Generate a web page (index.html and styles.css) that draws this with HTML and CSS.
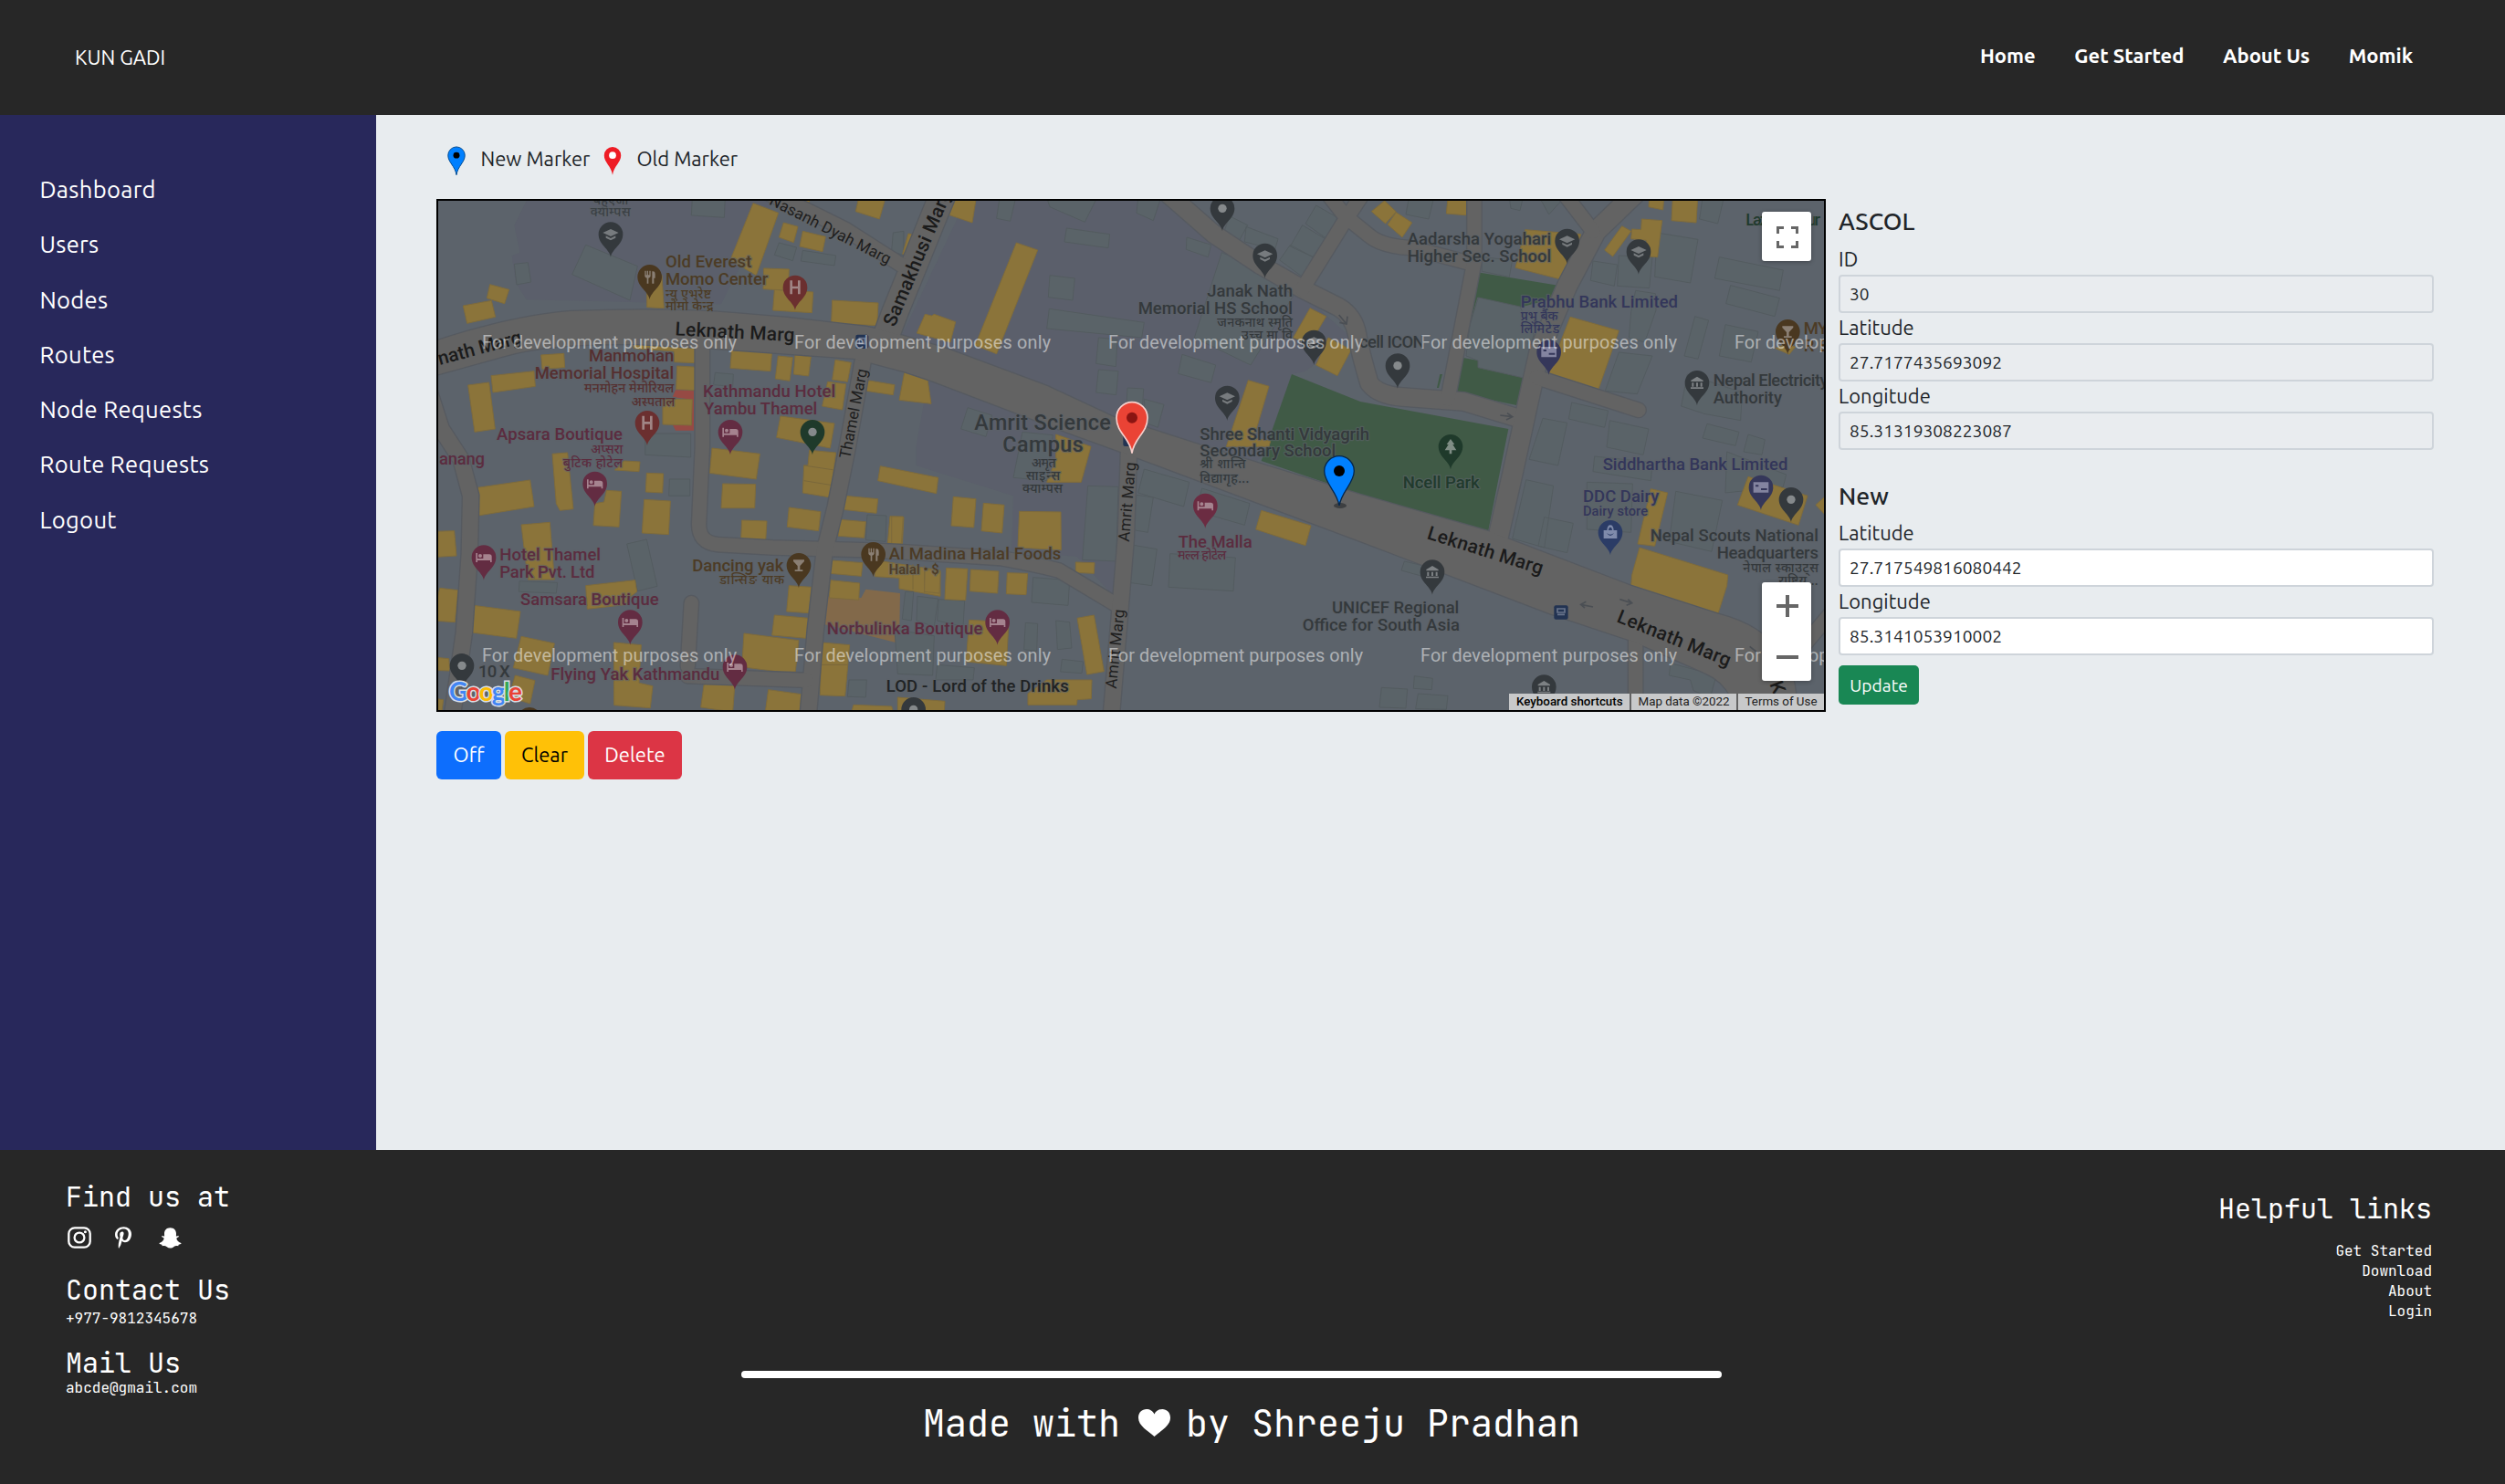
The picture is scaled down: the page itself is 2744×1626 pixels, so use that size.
FILE: index.html
```html
<!DOCTYPE html>
<html lang="en">
<head>
<meta charset="utf-8">
<title>Kun Gadi</title>
<link rel="stylesheet" href="styles.css">
</head>
<body>
<header class="navbar">
  <a class="brand">KUN GADI</a>
  <nav class="nav-links">
    <a>Home</a><a>Get Started</a><a>About Us</a><a>Momik</a>
  </nav>
</header>

<div class="layout">
  <aside class="sidebar">
    <a>Dashboard</a>
    <a>Users</a>
    <a>Nodes</a>
    <a>Routes</a>
    <a>Node Requests</a>
    <a>Route Requests</a>
    <a>Logout</a>
  </aside>

  <main class="content">
    <div class="legend">
      <svg class="legend-pin" viewBox="-52 -52 104 170"><path d="M0 112C-8 60-48 40-48 0A48 48 0 0 1 48 0C48 40 8 60 0 112z" fill="#0080ff" stroke="#024a90" stroke-width="5"/><circle r="18"/></svg>
      <span class="legend-text">New Marker</span>
      <svg class="legend-pin" viewBox="-52 -52 104 170"><path d="M0 112C-8 60-48 40-48 0A48 48 0 0 1 48 0C48 40 8 60 0 112z" fill="#ee1c25"/><circle r="20" fill="#fff"/></svg>
      <span class="legend-text">Old Marker</span>
    </div>

    <div class="workspace">
      <div>
        <div class="map">
<svg class="map-canvas" viewBox="480 220 1518 558" preserveAspectRatio="none">
<defs>
  <path id="pin" d="M0 75C-4 48-40 34-40 0A40 40 0 0 1 40 0C40 34 4 48 0 75z"/>
  <path id="cap" d="M-26-5 0-17 26-5 0 7zM-16 5 0 13 16 5V12L0 20-16 12z" fill="#777b7e"/>
  <path id="fork" d="M-16-20V-2Q-15 3-9 4V22H-4V4Q2 3 3-2V-20H-1V-6H-5V-20H-9V-6H-12V-20zM8 22V-18Q18-20 18-8V4H14V22z" fill="#8a7f74"/>
  <path id="hosp" d="M-17-23H-9V-4H9V-23H17V22H9V4H-9V22H-17z" fill="#a08585"/>
  <path id="bed" d="M-26-14H-21V4H-2V-10H18Q26-10 26-2V16H21V10H-21V16H-26z M-12-11A6 6 0 1 1-12 1 6 6 0 0 1-12-11z" fill="#a5838f"/>
  <circle id="dot" r="14" fill="#85898b"/>
  <path id="tree" d="M0-25 13-7H7L19 12H4V24H-4V12H-19L-7-7H-13z" fill="#7f8d85"/>
  <path id="cup" d="M-18-18H18V-13L4 2V15H13V20H-13V15H-4V2L-18-13z" fill="#8a7f74"/>
  <path id="gov" d="M-20-8 0-20 20-8V-4H-20zM-17 0H-11V13H-17zM-3 0H3V13H-3zM11 0H17V13H11zM-21 15H21V20H-21z" fill="#7d8184"/>
  <path id="card" d="M-25-17H25V17H-25zM-18-8V-2H-8V-8zM0 3V9H20V3z" fill="#8384a0" fill-rule="evenodd"/>
  <path id="bag" d="M-22-7H-11Q-10-24 0-24T11-7H22V20H-22zM-6-7H6Q5-17 0-17T-6-7zM-12 2Q0 20 12 2Q0 12-12 2z" fill="#7f8bab" fill-rule="evenodd"/>
  <g id="roads">
    <path class="w55" d="M-5 640 40 780 105 880 137 1000 133 1190 115 1450 78 1710"/>
    <path class="w50" d="M898 520V840L887 1090Q885 1155 950 1160L1130 1170 1430 1178 1570 1185 1880 1205Q1990 1225 2070 1245L2262 1360"/>
    <path class="w55" d="M1425 560 1375 840 1335 1040 1300 1180 1270 1440 1247 1710"/>
    <path class="w85" d="M1700-20 1530 400 1500 480"/>
    <path class="w50" d="M1100 0 1240 60 1370 125 1550 240"/>
    <path class="w55" d="M2300 840 2290 1140 2272 1360 2243 1710"/>
    <path class="w60" d="M2420 0 2580 140 2730 240 2870 320 2990 380Q3040 410 3050 470T3090 630Q3120 670 3200 675L3400 690 3580 745"/>
    <path class="w50" d="M2870 320 3010 95 3060 20M2940-10 3010 80 3090 145Q3130 180 3230 185L3420 235"/>
    <path class="w50" d="M3435 0V230L3348 680"/>
    <path class="w70" d="M3970 0 3835 130 3740 310 3650 520 3610 700 3560 930 3510 1150"/>
    <path class="w50" d="M3725 0 3825 130M3640 610 3975 718M862 1352 850 1560M850 1592 1240 1606M3965 1450V1710M4460 1560 4620 1370"/>
  </g>
  <path id="main-road" d="M470 376Q560 346 625 341Q730 337 803 343L863 348 950 358 990 368 1037 382 1147 423 1220 457 1313 487 1490 542 1630 582 1787 642 1883 673Q1930 685 1952 717Q1970 740 1968 790H1905Q1898 750 1867 737L1790 703 1697 672 1600 635 1490 593 1247 502 1167 473 1020 417 990 407 937 393 770 381 697 377Q600 376 553 390L470 413z"/>
</defs>
<rect x="480" y="220" width="1518" height="558" fill="#5c636b"/>
<g transform="translate(470 210) scale(.33333)">
  <path class="campus" d="M320 30 280 110 298 200 272 210 285 300 320 355 960 370 1130 30zM1750 30H2400L2640 190 2840 310 3030 480 2880 590 2835 600 2740 870 2700 900 1550 480 1740 80zM2040 700 1650 560 1600 840 1600 900 1920 1000 1915 1180 2130 1200 2250 1330 2275 860z"/>
  <path class="gray" d="M2605 200 2860 310 2700 570 2515 480z"/>
  <path class="park" d="M3445 265 3710 308 3700 350 3585 380 3445 348 3415 455 3408 440zM3395 545 3447 555V578L3597 612 3577 703 3372 660zM3322 600H3330L3318 645H3312zM2835 600 3060 690 3547 780 3535 840 3480 1118 3060 995 2735 885z"/>
  <path class="gray" d="M3448 348 3585 378 3630 470 3597 612 3447 578V555L3408 540 3420 440z"/>
  <path class="gray" d="M515 175 685 245 660 357 470 272zM280 238 325 233 335 297 288 306zM865 20H973L970 85 862 78zM1150 168 1208 183 1195 227 1135 208zM1228 193 1337 210 1332 243 1222 228zM940 595 1000 600 998 640 935 635zM1525 135 1560 130V210L1520 195z"/>
  <path class="gold" d="M200 305 263 322 248 368 190 350zM112 375 205 358 218 412 125 433zM1065 38 1148 70 1075 275 990 225zM1165 102 1212 115 1198 167 1150 150zM1228 130 1303 148 1293 197 1218 180zM1100 252 1183 255 1180 325 1098 320zM1135 322 1262 330 1258 398 1130 390zM1325 357 1476 366 1472 440 1322 432zM1200 20 1255 20 1238 58 1190 40zM1412 20H1500L1480 90 1402 65zM765 275 772 383 716 380V330zM368 537 443 532 446 578 372 583zM204 605 345 590 349 640 210 660zM128 636 197 627 217 780 150 790zM672 488 875 505V563L805 560V525L672 515zM815 573 883 577 880 653 812 650zM995 513 1127 520 1122 590 990 580zM1147 540 1195 545 1185 622 1138 615zM1203 537 1255 543 1247 606 1198 600zM1335 553 1387 562 1375 625 1325 618zM1310 625 1370 632 1358 717 1292 705zM1440 620 1530 635 1525 668 1437 655zM1155 738 1332 762 1318 843 1142 808z"/>
  <path class="ward" d="M810 652 870 655V785H810L800 765 860 760 862 683 800 675z"/>
  <path class="gold" d="M768 680 865 683 862 768 768 765z"/>
</g>
<g transform="translate(980 210) scale(.33333)">
  <path class="gray" d="M345 20H398L380 97 335 88zM500 20H665L625 100 510 50zM565 120 707 140 702 185 558 165zM510 275 592 285 585 357 505 347zM508 385 820 430 812 480 500 450zM670 480 732 485 727 575 662 565zM670 585 735 590 728 668 662 660zM765 645 818 648 815 700 762 700zM820 682 885 700 865 775 825 760zM945 535 1055 570 1040 628 932 598zM240 710 320 735 300 805 218 780zM960 150 1040 175 1030 215 958 190zM1100 80 1160 110 1130 165 1080 140zM1155 115 1260 155 1250 190 1150 165zM1340 110 1415 155 1375 215 1300 180zM1300 175 1375 215 1340 280 1265 225zM1385 45 1455 85 1420 155 1350 105zM800 20H875L850 95 795 70zM420 790 520 800 500 950 390 940z"/>
  <path class="gold" d="M195 20H268L255 102 175 75zM45 138 85 145 68 212 26 205zM100 403 122 408 130 403 200 428 183 495 73 465zM400 168 470 192 335 533 265 505zM1365 383 1418 410 1365 500 1310 480zM1425 480 1500 520 1455 605 1385 570zM35 580 103 583 120 697 15 685zM1162 620 1230 640 1180 810 1235 820 1230 838H1090zM530 798 645 838 613 955 500 955 530 880z"/>
</g>
<g transform="translate(1490 210) scale(.33333)">
  <path class="gray" d="M975 135 1110 157 1085 300 968 280zM850 210 960 215 950 317 845 310zM765 228 845 240 835 310 757 292zM1180 215 1390 258 1378 325 1165 285zM1217 308 1378 350 1362 410 1202 368zM905 325 970 335 972 390 935 495 883 480 890 395zM1100 410 1145 423 1110 550 1065 540zM1200 437 1308 460 1285 560 1180 540zM850 528 960 540 910 665 805 655zM695 693 815 720 803 775 685 747zM600 745 680 760 650 900 555 880zM820 752 948 780 930 865 810 840zM1140 763 1245 790 1233 835 1125 810zM1275 798 1330 815 1320 865 1260 855zM160 20H242L225 90 150 75zM1125 20H1195L1175 105 1115 90zM1075 600 1255 660 1250 752 1130 730 1055 705zM590 20H670L620 75zM490 20H535L525 62 495 55zM400 215 500 225 490 280 400 262z"/>
  <path class="gold" d="M80 30 118 66 83 105 37 65zM118 68 170 102 138 150 90 108zM288 20H358L355 78 283 72zM542 125 725 140 685 295 510 250zM860 113 890 130 830 213 803 192zM925 90 992 95 977 215 950 213 940 160 890 155 893 123 923 125zM950 20H998L995 60 948 50zM1027 20H1109L1104 102 1023 95zM690 412 850 457 782 652 615 607zM1365 515 1400 500 1430 510 1410 535z"/>
</g>
<g transform="translate(470 490) scale(.33333)">
  <path class="gray" d="M790 105H857V160H788zM650 318 715 303 750 457 685 473zM297 440 422 445 418 480 295 475zM1440 222 1503 225 1500 310 1435 305zM1380 765H1438L1435 822 1375 820zM710-45H860V33L710 25z"/>
  <path class="hotel" d="M1297 490 1420 495 1435 467 1548 480 1545 645 1290 580z"/>
  <path class="gold" d="M405 22 455 18 474 203 430 208 418 185zM640 45 693 48 690 80 610 75zM715 85 770 87 767 150 712 147zM583 142 632 145 624 262 540 257 545 185 575 180zM707 172 793 177 787 287 700 282zM145 135 332 108 345 195 155 226zM303 255 397 247 412 435 325 435zM10 277 83 275 90 357 10 362zM35 463 95 470 85 575 10 570zM145 520 300 540 287 628 133 608zM515 455 677 437 683 475 650 500V517L520 532zM303 622 412 645 390 750 277 725zM283 750 348 767 332 843 262 820zM10 690 65 695 68 735 10 733zM607 642 697 650 690 775 735 785 727 857 608 848zM905 770 1005 775 998 870 893 855zM1035 612 1215 635 1203 745 1028 722zM1115 797 1223 812 1218 870H1105zM1135 552 1247 562 1240 628 1127 618zM1183 455 1257 460 1248 545 1175 540zM930 3 1087 22 1075 105 922 85zM965 120 1073 122 1070 200H960zM1028 240 1110 243 1106 308 1025 303zM1183 198 1287 212 1280 275 1177 262zM1250 10 1337 18 1318 165 1228 150 1232 60 1245 60zM1367 160 1475 170 1470 217 1362 205zM1350 238 1435 245 1430 298 1345 292zM1515 227 1560 230 1555 320 1507 315zM1483 62 1673 100 1667 152 1475 110zM1323 372 1425 380 1420 424 1318 415zM1320 437 1415 447 1412 502 1315 495zM1290 642 1382 650 1367 818 1285 815zM1470 372 1680 405V490L1545 465V430L1465 425zM1395 847 1520 852 1525 870H1388zM10 825 47 830 42 870H10z"/>
  <path class="seam" d="M1232 60 1332 75M1232 110 1325 125M1290 715H1375M1590 385V468M1628 390V478"/>
</g>
<g transform="translate(980 490) scale(.33333)">
  <path class="gray" d="M635 127 735 130 728 375 617 370zM820 72 968 115 950 195 800 150zM795 157 850 165 832 280 785 272zM785 322 862 335 845 455 770 445zM905 350 1120 363 1113 473 900 460zM1010 135 1167 185 1150 256 990 210zM455 428 575 437 570 520 450 510zM430 577 470 580 467 670 425 665zM530 570 575 575 582 660 535 665zM550 697 620 705 615 743 545 738zM35 475H62L55 570 25 565zM75 490 143 498 130 590 72 570zM145 500 230 505 225 590 140 570zM0 600 130 620 125 750 10 745zM140 715 262 725 258 765 135 765z"/>
  <path class="gold" d="M193 163 267 170 260 264 186 258zM292 184 360 190 353 282 285 275zM410 211 546 213 547 338 405 330zM-10 228H28L22 318H-10zM595 378 657 380 655 415 595 412zM170 397 240 400 233 503 165 500zM100 400 150 410 147 480 98 475zM250 402 342 408 338 480 247 473zM370 413 437 415 432 485 367 482zM600 562 655 552 688 737 632 747zM245 568 375 575 367 718 235 705zM500 765H648L646 827 600 830 598 847H438V810zM10 822 165 835 163 870H10zM1205 208 1368 258 1350 323 1187 270z"/>
</g>
<g transform="translate(1490 490) scale(.33333)">
  <path class="gray" d="M545 107 635 127 605 330 500 300zM605 230 700 250 680 347 585 325zM745 115 895 120 890 280 745 270zM1037 145 1190 175 1155 343 1015 310zM1020 710 1170 750 1150 825 1095 800 1085 765 1015 750zM70 790 155 795 150 858 63 855zM178 752 238 760 235 797 175 793zM190 810 288 817 283 862 182 860zM145 375 230 395 225 430 135 405zM1205 15 1400 90 1390 130 1200 150zM770 30 960 50 955 110 765 80z"/>
  <path class="gold" d="M955 137 1010 150 968 325 912 318zM918 330 1208 420 1205 455 1175 550 890 455 893 420zM1275 97 1470 160 1440 256 1240 190zM1497 190 1540 150V235z"/>
</g>

<g class="road-edge"><use href="#roads" transform="translate(470 210) scale(.33333)"/><use href="#main-road"/></g>
<g class="road-fill"><use href="#roads" transform="translate(470 210) scale(.33333)"/><use href="#main-road"/></g>
<g class="arrow" transform="translate(1490 490) scale(.33333)"><path d="M765 525 725 517M742 508 725 517 738 528M853 500 893 512M880 500 893 512 875 520M1280 655 1305 675"/></g>
<g class="arrow" transform="translate(1490 210) scale(.33333)"><path d="M460 735 500 740M483 728 500 740 480 750M-70 405-45 435M-42 410-45 435-68 430"/></g>

<g class="label" transform="translate(470 210) scale(.33333)">
  <g class="hi brown"><text x="540" y="42" class="gy" textLength="115">बहुएजी</text><text x="530" y="82" class="gy" textLength="132">क्याम्पस</text></g>
  <g class="brown"><text x="777" y="249" textLength="283">Old Everest</text><text x="777" y="306" textLength="337">Momo Center</text><g class="hi"><text x="777" y="350" textLength="150">न्यु एभरेष्ट</text><text x="777" y="391" textLength="158">मोमो केन्द्र</text></g></g>
  <g class="rust"><text x="525" y="558" textLength="280">Manmohan</text><text x="347" y="614" textLength="458">Memorial Hospital</text><g class="hi"><text x="510" y="660" textLength="295">मनमोहन मेमोरियल</text><text x="665" y="704" textLength="143">अस्पताल</text></g></g>
  <g class="rose"><text x="222" y="816" textLength="414">Apsara Boutique</text><text x="900" y="675" textLength="436">Kathmandu Hotel</text><text x="903" y="731" textLength="373">Yambu Thamel</text><text x="33" y="897" textLength="150">anang</text><g class="hi"><text x="532" y="861" textLength="105">अप्सरा</text><text x="440" y="905" textLength="196">बुटिक होटेल</text></g></g>
  <g class="street"><text transform="translate(35 570) rotate(-15)" textLength="283">nath Marg</text><text transform="translate(808 472) rotate(3)" textLength="393">Leknath Marg</text>
  <text class="minor" transform="translate(1115 40) rotate(27)" textLength="440">Nasanh Dyah Marg</text><text transform="translate(1530 447) rotate(-67)" textLength="480">Samakhusi Marg</text><text class="minor" transform="translate(1383 880) rotate(-79)" textLength="300">Thamel Marg</text></g>
</g>
<g class="label" transform="translate(980 210) scale(.33333)">
  <g class="slate"><text x="1027" y="346" textLength="281">Janak Nath</text><text x="800" y="402" textLength="508">Memorial HS School</text><text x="1003" y="815" textLength="557">Shree Shanti Vidyagrih</text><text x="1003" y="871" textLength="447">Secondary School</text><text x="1527" y="514" textLength="215">cell ICON</text>
  <g class="hi"><text x="1060" y="444" textLength="248">जनकनाथ स्मृति</text><text x="1140" y="486" textLength="168">उच्च मा वि</text><text x="1003" y="910" textLength="150">श्री शान्ति</text><text x="1003" y="958" textLength="162">विद्यागृह...</text><text x="450" y="905" textLength="80">अमृत</text><text x="432" y="948" textLength="112">साइन्स</text><text x="420" y="990" textLength="132">क्याम्पस</text></g>
  <g class="big"><text x="262" y="782" textLength="448">Amrit Science</text><text x="355" y="856" textLength="265">Campus</text></g></g>
</g>
<g class="label" transform="translate(1490 210) scale(.33333)">
  <g class="slate"><text x="155" y="175" textLength="473">Aadarsha Yogahari</text><text x="155" y="231" textLength="473">Higher Sec. School</text><text x="1160" y="640" textLength="378">Nepal Electricity</text><text x="1160" y="696" textLength="226">Authority</text></g>
  <g class="indigo"><text x="527" y="382" textLength="517">Prabhu Bank Limited</text><text x="797" y="916" textLength="608">Siddhartha Bank Limited</text><g class="hi"><text x="527" y="422" textLength="122">प्रभु बैंक</text><text x="527" y="466" textLength="128">लिमिटेड</text></g></g>
  <g class="pine"><text x="1267" y="110" textLength="245">Lazimpatpur</text></g><g class="brown"><text x="1457" y="468" textLength="80">MY</text><text x="1457" y="524" textLength="80">RE</text></g>
</g>
<g class="label" transform="translate(470 490) scale(.33333)">
  <g class="rose"><text x="232" y="373" textLength="332">Hotel Thamel</text><text x="232" y="429" textLength="312">Park Pvt. Ltd</text><text x="300" y="518" textLength="455">Samsara Boutique</text><text x="400" y="764" textLength="555">Flying Yak Kathmandu</text><text x="1307" y="615" textLength="512">Norbulinka Boutique</text></g>
  <g class="brown"><text x="865" y="408" textLength="300">Dancing yak</text><text x="1511" y="370" textLength="566">Al Madina Halal Foods</text><text x="1511" y="416" class="sub" textLength="165">Halal • $</text><g class="hi"><text x="955" y="450" textLength="212">डान्सिङ याक</text></g></g>
  <g class="slate"><text x="162" y="755" textLength="104">10 X</text></g><g class="night"><text x="1502" y="803" textLength="600">LOD - Lord of the Drinks</text></g>
</g>
<g class="label" transform="translate(980 490) scale(.33333)">
  <g class="street"><text class="minor" transform="translate(770 312) rotate(-85)" textLength="262">Amrit Marg</text><text class="minor" transform="translate(728 795) rotate(-84)" textLength="262">Amrit Marg</text></g>
  <g class="rose"><text x="932" y="329" textLength="243">The Malla</text><g class="hi"><text x="930" y="370" textLength="160">मल्ल होटेल</text></g></g>
  <g class="slate"><text x="1437" y="546" textLength="418">UNICEF Regional</text><text x="1340" y="603" textLength="517">Office for South Asia</text></g>
</g>
<g class="label" transform="translate(1490 490) scale(.33333)">
  <g class="pine"><text x="140" y="136" textLength="252">Ncell Park</text></g>
  <g class="indigo"><text x="732" y="180" textLength="250">DDC Dairy</text><text class="sub" x="732" y="226" textLength="213">Dairy store</text></g>
  <g class="slate"><text x="953" y="309" textLength="553">Nepal Scouts National</text><text x="1172" y="365" textLength="334">Headquarters</text><g class="hi"><text x="1258" y="410" textLength="248">नेपाल स्काउट्स</text><text x="1375" y="452" textLength="130">राष्ट्रिय...</text></g></g>
  <g class="street"><text transform="translate(217 300) rotate(17.5)" textLength="395">Leknath Marg</text><text transform="translate(840 573) rotate(22)" textLength="397">Leknath Marg</text><text transform="translate(1345 778) rotate(70)">K</text></g>
</g>

<g transform="translate(470 210) scale(.33333)">
  <g class="stop"><rect x="1402" y="470" width="42" height="46" rx="6"/><rect x="2281" y="795" width="40" height="42" rx="6"/><rect x="3697" y="1360" width="46" height="46" rx="6"/><path d="M3708 1371H3732V1383H3708zM3708 1390H3732M1414 482H1432V500H1414z"/></g>
  <g transform="translate(597 140)"><use href="#pin" fill="#34393d"/><use href="#cap"/></g>
  <g transform="translate(725 280)"><use href="#pin" fill="#4a3820"/><use href="#fork"/></g>
  <g transform="translate(1203 315)"><use href="#pin" fill="#6b2f2f"/><use href="#hosp"/></g>
  <g transform="translate(717 760)"><use href="#pin" fill="#6b2f2f"/><use href="#hosp"/></g>
  <g transform="translate(990 790)"><use href="#pin" fill="#632c42"/><use href="#bed"/></g>
  <g transform="translate(1260 790)"><use href="#pin" fill="#1f3a2b"/><use href="#dot"/></g>
  <g transform="translate(2607 55)"><use href="#pin" fill="#34393d"/><use href="#dot"/></g>
  <g transform="translate(2747 210)"><use href="#pin" fill="#34393d"/><use href="#cap"/></g>
  <g transform="translate(2908 495)"><use href="#pin" fill="#34393d"/><use href="#cap"/></g>
  <g transform="translate(2623 678)"><use href="#pin" fill="#34393d"/><use href="#cap"/></g>
  <g transform="translate(3740 162)"><use href="#pin" fill="#34393d"/><use href="#cap"/></g>
  <g transform="translate(3975 197)"><use href="#pin" fill="#34393d"/><use href="#cap"/></g>
  <g transform="translate(3183 572)"><use href="#pin" fill="#34393d"/><use href="#dot"/></g>
  <g transform="translate(3357 838)"><use href="#pin" fill="#1f3a2b"/><use href="#tree"/></g>
  <g transform="translate(3680 527)"><use href="#pin" fill="#35375a"/><use href="#card"/></g>
  <g transform="translate(4465 460)"><use href="#pin" fill="#4a3820"/><use href="#cup"/></g>
  <g transform="translate(4167 628)"><use href="#pin" fill="#34393d"/><use href="#gov"/></g>
  <g transform="translate(545 960)"><use href="#pin" fill="#632c42"/><use href="#bed"/></g>
  <g transform="translate(180 1202)"><use href="#pin" fill="#632c42"/><use href="#bed"/></g>
  <g transform="translate(661 1415)"><use href="#pin" fill="#632c42"/><use href="#bed"/></g>
  <g transform="translate(108 1558)"><use href="#pin" fill="#34393d"/><use href="#dot"/></g>
  <g transform="translate(1005 1562)"><use href="#pin" fill="#632c42"/><use href="#bed"/></g>
  <g transform="translate(1215 1228)"><use href="#pin" fill="#4a3820"/><use href="#cup"/></g>
  <g transform="translate(1460 1192)"><use href="#pin" fill="#4a3820"/><use href="#fork"/></g>
  <g transform="translate(2551 1032)"><use href="#pin" fill="#6b2c42"/><use href="#bed"/></g>
  <g transform="translate(1868 1415)"><use href="#pin" fill="#632c42"/><use href="#bed"/></g>
  <g transform="translate(1592 1702)"><use href="#pin" fill="#34393d"/><use href="#dot"/></g>
  <g transform="translate(330 1735)"><use href="#pin" fill="#4a3820"/></g>
  <g transform="translate(4377 972)"><use href="#pin" fill="#35375a"/><use href="#card"/></g>
  <g transform="translate(4476 1012)"><use href="#pin" fill="#34393d"/><use href="#dot"/></g>
  <g transform="translate(3882 1120)"><use href="#pin" fill="#2b3c66"/><use href="#bag"/></g>
  <g transform="translate(3297 1250)"><use href="#pin" fill="#34393d"/><use href="#gov"/></g>
  <g transform="translate(3664 1628)"><use href="#pin" fill="#34393d"/><use href="#gov"/></g>
</g>

<g class="watermark">
  <text x="528" y="382" textLength="279">For development purposes only</text><text x="870" y="382" textLength="281">For development purposes only</text><text x="1214" y="382" textLength="279">For development purposes only</text><text x="1556" y="382" textLength="281">For development purposes only</text><text x="1900" y="382" textLength="279">For development purposes only</text>
  <text x="528" y="725" textLength="279">For development purposes only</text><text x="870" y="725" textLength="281">For development purposes only</text><text x="1214" y="725" textLength="279">For development purposes only</text><text x="1556" y="725" textLength="281">For development purposes only</text><text x="1900" y="725" textLength="279">For development purposes only</text>
</g>

<g transform="translate(1240 457.7) scale(.33333)">
  <path d="M0 117C-6 66-51 50-51 0A51 51 0 0 1 51 0C51 50 6 66 0 117z" fill="#ea4335" stroke="#f6cfcb" stroke-width="5"/><circle r="18" fill="#8a1512"/>
</g>
<ellipse cx="1468" cy="554" rx="7" ry="3" fill="#3d3f41"/>
<g transform="translate(1467 516) scale(.33333)">
  <path d="M0 114C-8 66-49 40-49 0A49 49 0 0 1 49 0C49 40 8 66 0 114z" fill="#0080ff" stroke="#06264a" stroke-width="4"/><circle r="18"/>
</g>
<text class="google" x="492" y="768" textLength="80"><tspan fill="#4285f4">G</tspan><tspan fill="#ea4335">o</tspan><tspan fill="#fbbc04">o</tspan><tspan fill="#4285f4">g</tspan><tspan fill="#34a853">l</tspan><tspan fill="#ea4335">e</tspan></text>
</svg>
          <div class="map-button fullscreen"><svg viewBox="-1 -1 24 24"><path d="M0 0H8V3H3V8H0zM16 0H24V8H21V3H16zM0 16H3V21H8V24H0zM21 16H24V24H16V21H21z"/></svg></div>
          <div class="map-button zoom"><svg viewBox="-1 1 24 24"><path d="M10 0H14V10H24V14H14V24H10V14H0V10H10z"/></svg><svg viewBox="-1 0 24 24"><path d="M0 11H24V15H0z"/></svg></div>
          <div class="attribution"><span class="keys">Keyboard shortcuts</span><span>Map data ©2022</span><span>Terms of Use</span></div>
        </div>
        <div class="actions">
          <button class="btn off">Off</button><button class="btn clear">Clear</button><button class="btn delete">Delete</button>
        </div>
      </div>

      <form class="details">
        <h5>ASCOL</h5>
        <label>ID</label>
        <div class="field readonly">30</div>
        <label>Latitude</label>
        <div class="field readonly">27.7177435693092</div>
        <label>Longitude</label>
        <div class="field readonly">85.31319308223087</div>
        <h5 class="second">New</h5>
        <label>Latitude</label>
        <div class="field">27.717549816080442</div>
        <label>Longitude</label>
        <div class="field">85.3141053910002</div>
        <button class="btn update">Update</button>
      </form>
    </div>
  </main>
</div>

<footer class="footer">
  <section class="contact">
    <h3>Find us at</h3>
    <div class="social">
      <svg viewBox="0 0 26 24" width="26" height="24"><rect x="1.3" y="1.3" width="23.4" height="21.4" rx="6.5" fill="none" stroke="#fff" stroke-width="2.3"/><circle cx="13" cy="12" r="5.4" fill="none" stroke="#fff" stroke-width="2.3"/><circle cx="19.4" cy="5.8" r="1.5" fill="#fff"/></svg>
      <svg viewBox="0 0 384 512" width="18" height="24" preserveAspectRatio="none"><path fill="#fff" d="M204 6.500C101.400 6.500 0 74.900 0 185.600 0 256 39.600 296 63.600 296c9.900 0 15.600-27.600 15.600-35.400 0-9.300-23.700-29.100-23.700-67.800 0-80.400 61.200-137.400 140.400-137.400 68.100 0 118.500 38.700 118.500 109.800 0 53.100-21.300 152.700-90.300 152.700-24.900 0-46.200-18-46.200-43.800 0-37.800 26.400-74.400 26.400-113.400 0-66.200-93.900-54.200-93.900 25.800 0 16.800 2.100 35.400 9.600 50.700-13.800 59.400-42 147.900-42 209.100 0 18.900 2.700 37.500 4.500 56.400 3.400 3.800 1.700 3.400 6.900 1.500 50.400-69 48.600-82.500 71.400-172.800 12.300 23.400 44.100 36 69.300 36 106.200 0 153.900-103.500 153.900-196.800C384 71.300 298.200 6.500 204 6.500z"/></svg>
      <svg class="snap" viewBox="0 0 25 23" width="25" height="23"><path fill="#fff" d="M12.500.3C8.300.3 6 3.200 6 6.800L6.100 9.400C5 9.900 3.600 8.900 3 9.500 2.700 10.300 4.600 10.800 5.500 11.600 5.900 13.500 3.800 16.200.6 17 .1 17.300.4 18 3.300 18.700L3.800 20.300C5.500 20.100 7 19.800 8.500 21 11 23 14 23 16.500 21 18 19.800 19.500 20.100 21.200 20.300L21.700 18.700C24.600 18 24.900 17.300 24.400 17 21.200 16.200 19.100 13.500 19.500 11.600 20.400 10.800 22.300 10.300 22 9.500 21.400 8.900 20 9.900 18.900 9.400L19 6.800C19 3.200 16.700.3 12.500.3z"/></svg>
    </div>
    <h3>Contact Us</h3>
    <p>+977-9812345678</p>
    <h3>Mail Us</h3>
    <p>abcde@gmail.com</p>
  </section>
  <section class="credit">
    <div class="rule"></div>
    <div class="made">Made with <svg class="heart" viewBox="0 0 35 30"><path fill="#fff" d="M17.500 30C11 24 0 18.500 0 9.500 0 3.500 4 0 8.800 0 12.500 0 16 2 17.500 5.600 19 2 22.500 0 26.200 0 31 0 35 3.500 35 9.500 35 18.500 24 24 17.500 30z"/></svg> by Shreeju Pradhan</div>
  </section>
  <section class="links">
    <h3>Helpful links</h3>
    <a>Get Started</a>
    <a>Download</a>
    <a>About</a>
    <a>Login</a>
  </section>
</footer>
</body>
</html>
```
FILE: styles.css
```css
* { box-sizing: border-box; }
body { margin: 0; background: #272727; font-family: Ubuntu, "Noto Sans", sans-serif; color: #212529; }
h3, h5, p { margin: 0; font-weight: 400; }

.navbar { height: 126px; padding: 0 101px 0 82px; background: #272727; color: #fff; display: flex; justify-content: space-between; align-items: center; }
.brand { font-size: 22px; margin-bottom: 2px; }
.nav-links { display: flex; gap: 42.500px; margin-bottom: 6px; font-size: 22px; font-weight: 700; }

.layout { display: flex; height: 1134px; }
.sidebar { width: 412px; padding: 52px 0 0 43.500px; background: #28285b; color: #fff; font-size: 25.600px; letter-spacing: .3px; line-height: 60.300px; display: flex; flex-direction: column; }
.content { flex: 1; padding: 28px 0 0 66px; background: #e8ecef; }

.legend { height: 40px; margin-bottom: 24px; padding-left: 12px; display: flex; align-items: center; font-size: 22px; }
.legend-pin { width: 20px; height: 33px; margin-top: 4px; }
.legend-text { margin: 0 14.500px 1px 16.500px; }

.workspace { display: grid; grid-template-columns: 1522px 652px; gap: 14px; align-items: start; }
.map { position: relative; height: 562px; border: 2px solid #000; overflow: hidden; }
.map-canvas { display: block; width: 1518px; height: 558px; }
.campus { fill: #5b5f6b; }
.park { fill: #405a46; }
.gray { fill: #5a6368; stroke: #535b5f; stroke-width: 3; }
.gold { fill: #8b743a; stroke: #7d6a3c; stroke-width: 3; }
.hotel { fill: #82694a; }
.ward { fill: #964a44; }
.seam { fill: none; stroke: #79673a; stroke-width: 3; }
.w50 { --w: 46px; } .w55 { --w: 52px; } .w60 { --w: 58px; } .w70 { --w: 64px; } .w85 { --w: 84px; }
#roads path { fill: none; stroke-width: calc(var(--w) + var(--edge)); stroke-linecap: round; stroke-linejoin: round; }
.road-edge { --edge: 8px; stroke: #565a60; fill: #565a60; stroke-width: 2.500px; }
.road-fill { --edge: 0px; stroke: #636363; fill: #636363; stroke-width: 0; }
.arrow path { fill: none; stroke: #4b4f54; stroke-width: 5; }
.stop rect { fill: #223352; } .stop path { fill: none; stroke: #68748b; stroke-width: 5; }

.label { font-family: Roboto, "Noto Sans", sans-serif; font-size: 55.500px; font-weight: 500; }
.label text { paint-order: stroke; stroke: #5c6268; stroke-width: 7px; stroke-opacity: .6; stroke-linejoin: round; }
.label .hi { font-family: "Noto Sans", "Noto Sans Devanagari", sans-serif; font-size: 42px; }
.label .sub { font-size: 44px; }
.label .big { font-size: 70px; }
.brown { fill: #4c3b25; } .rust { fill: #552f30; } .rose { fill: #5b2c3f; } .slate { fill: #34393c; }
.indigo { fill: #33365a; } .pine { fill: #213a2d; } .night { fill: #202224; } .gy { fill: #3b4145; }
.label .street { fill: #1b1b1b; font-size: 62.500px; }
.label .street text { stroke: #636363; }
.label .street .minor { font-size: 51.500px; font-weight: 400; fill: #1e1e1e; }
.watermark { font-family: Roboto, sans-serif; font-size: 19.800px; fill: #fff; fill-opacity: .5; }
.google { font-family: Lato, sans-serif; font-size: 28px; font-weight: 700; paint-order: stroke; stroke: #d9dfe6; stroke-width: 3px; }

.map-button { position: absolute; right: 14px; width: 54px; background: #fff; border-radius: 3px; box-shadow: 0 1px 5px rgba(0, 0, 0, .3); display: grid; grid-auto-rows: 54px; place-items: center; }
.map-button svg { width: 24px; height: 24px; fill: #666; display: block; overflow: visible; }
.fullscreen { top: 12px; }
.zoom { bottom: 32px; }
.attribution { position: absolute; right: 0; bottom: 0; height: 18px; display: flex; gap: 2px; font: 13.350px/18px Roboto, sans-serif; color: #222; }
.attribution span { background: #c8c9ca; padding: 0 7.500px; }
.attribution .keys { font-weight: 500; color: #000; }

.actions { margin-top: 21px; display: flex; gap: 4px; }
.btn { border: 0; border-radius: 6px; padding: 0 0 3px; height: 53px; font-family: inherit; font-size: 22px; color: #fff; }
.off { width: 71px; background: #0d6efd; }
.clear { width: 87px; background: #ffc107; color: #000; }
.delete { width: 103px; background: #dc3545; }

.details { padding-top: 4px; }
.details h5 { font-size: 26.500px; line-height: 40px; font-weight: 500; margin-bottom: 5.500px; }
.details .second { margin-top: 30px; }
.details label { display: block; font-size: 22px; line-height: 31px; padding-bottom: 2px; }
.field { height: 42px; padding: 0 10px; border: 2px solid #ced4da; border-radius: 4px; background: #fff; font-size: 19.200px; line-height: 38px; }
.readonly { background: #e9ecef; }
.update { display: block; margin-top: 11px; padding: 0; width: 88px; height: 43px; border-radius: 5px; background: #198754; font-size: 19.200px; }

.footer { height: 366px; padding: 0 80px 0 72px; background: #272727; color: #fff; display: grid; grid-template-columns: 739px 1076px 1fr; font-family: "JetBrains Mono", "DejaVu Sans Mono", monospace; font-size: 16px; line-height: 22px; }
.footer h3 { font-size: 30px; line-height: 32px; }
.contact { padding-top: 35px; }
.social { display: flex; align-items: center; margin: 17px 0 29px 2px; height: 24px; }
.social svg + svg { margin-left: 26px; }
.social .snap { margin-left: 30px; }
.contact p { margin: 5px 0 21px; }
.contact p:last-child { margin-top: 1px; }
.rule { height: 8px; margin: 242px 1px 0; border-radius: 4px; background: #fff; }
.made { margin-top: 26px; padding-left: 44px; text-align: center; font-size: 40px; line-height: 48px; white-space: nowrap; }
.heart { width: 35px; height: 30px; margin: 0 -7px 0 -4px; }
.links { padding-top: 47.500px; text-align: right; display: flex; flex-direction: column; }
.links h3 { margin-bottom: 20px; }
```
